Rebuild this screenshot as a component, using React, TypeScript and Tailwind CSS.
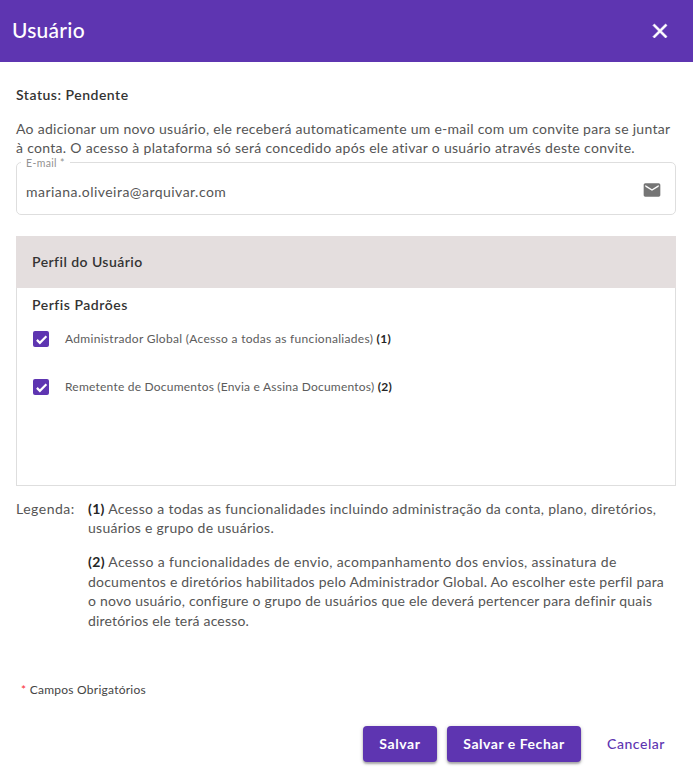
import React from 'react';

function Check() {
  return (
    <span className="flex h-4 w-4 shrink-0 items-center justify-center rounded-[2px] bg-[#5e35b1]">
      <svg viewBox="0 0 24 24" className="h-[13px] w-[13px]" fill="none" stroke="#fff" strokeWidth="4">
        <path d="M3.5 12.7 9 18.2 21 6.2" />
      </svg>
    </span>
  );
}

function Line({ className, children }: { className: string; children: React.ReactNode }) {
  return <span className={`block whitespace-nowrap ${className}`}>{children}</span>;
}

function ProfileRow({ label, mark, tracking }: { label: string; mark: string; tracking: string }) {
  return (
    <label className="flex h-12 items-center gap-4 pl-4">
      <Check />
      <span className={`whitespace-nowrap text-xs text-[#5c5c5c] ${tracking}`}>
        {label} <b className="text-[#262626]">{mark}</b>
      </span>
    </label>
  );
}

export default function App() {
  return (
    <div className="flex h-[774px] w-[693px] flex-col bg-white font-['Lato','Noto_Sans',sans-serif] text-sm leading-[19.6px] text-[#555]">
      <header className="flex h-[62px] shrink-0 items-center justify-between bg-[#5e35b1] pl-3 pr-[21px] text-white">
        <h1 className="pb-[3px] text-[21px] font-medium tracking-[0.25px]">Usuário</h1>
        <svg viewBox="0 0 24 24" className="h-6 w-6" fill="#fff">
          <path d="M19 6.41 17.59 5 12 10.59 6.41 5 5 6.41 10.59 12 5 17.59 6.41 19 12 13.41 17.59 19 19 17.59 13.41 12z" stroke="#fff" strokeWidth="0.7" />
        </svg>
      </header>

      <main className="px-4 pt-[23px]">
        <p className="font-semibold tracking-[0.5px] text-[#333]">Status: Pendente</p>
        <p className="mt-[14px]">
          <Line className="tracking-[0.28px]">Ao adicionar um novo usuário, ele receberá automaticamente um e-mail com um convite para se juntar</Line>
          <Line className="tracking-[0.3px]">à conta. O acesso à plataforma só será concedido após ele ativar o usuário através deste convite.</Line>
        </p>

        <fieldset className="-mt-[1px] h-[58px] w-[660px] rounded-[5px] border border-[#dedede] pl-1 pr-[13px]">
          <legend className="h-[11px] px-[5px] pt-px text-[10.5px] leading-[11px] tracking-[0.35px] text-[#929292]">E-mail *</legend>
          <div className="flex h-[46px] items-center justify-between pl-[5px]">
            <span className="pt-[2px] tracking-[0.47px]">mariana.oliveira@arquivar.com</span>
            <svg viewBox="0 0 24 24" className="mb-px h-5 w-5" fill="#757575">
              <path d="M20 4H4c-1.1 0-1.99.9-1.99 2L2 18c0 1.1.9 2 2 2h16c1.1 0 2-.9 2-2V6c0-1.1-.9-2-2-2zm0 4-8 5-8-5V6l8 5 8-5v2z" />
            </svg>
          </div>
        </fieldset>

        <section className="mt-[21px] h-[250px] w-[660px] border border-[#dedede]">
          <h2 className="-mx-px -mt-px flex h-[52px] items-center bg-[#e4dede] pl-4 font-semibold tracking-[0.44px] text-[#333]">Perfil do Usuário</h2>
          <h3 className="mb-px mt-[7px] pl-[15px] font-semibold tracking-[0.52px] text-[#333]">Perfis Padrões</h3>
          <ProfileRow label="Administrador Global (Acesso a todas as funcionaliades)" mark="(1)" tracking="tracking-[0.3px]" />
          <ProfileRow label="Remetente de Documentos (Envia e Assina Documentos)" mark="(2)" tracking="tracking-[0.22px]" />
        </section>

        <section className="mt-[13px] flex">
          <span className="w-[72px] shrink-0 tracking-[0.5px]">Legenda:</span>
          <div>
            <p>
              <Line className="tracking-[0.31px]"><b className="text-[#262626]">(1)</b> Acesso a todas as funcionalidades incluindo administração da conta, plano, diretórios,</Line>
              <Line className="tracking-[0.26px]">usuários e grupo de usuários.</Line>
            </p>
            <p className="mt-[14px]">
              <Line className="tracking-[0.35px]"><b className="text-[#262626]">(2)</b> Acesso a funcionalidades de envio, acompanhamento dos envios, assinatura de</Line>
              <Line className="tracking-[0.22px]">documentos e diretórios habilitados pelo Administrador Global. Ao escolher este perfil para</Line>
              <Line className="tracking-[0.22px]">o novo usuário, configure o grupo de usuários que ele deverá pertencer para definir quais</Line>
              <Line className="tracking-[0.18px]">diretórios ele terá acesso.</Line>
            </p>
          </div>
        </section>

        <p className="mt-[50px] pl-[5px] text-xs leading-[19.6px] tracking-[0.25px] text-[#444]"><span className="text-red-500">*</span> Campos Obrigatórios</p>
      </main>

      <footer className="mt-auto mb-3 flex h-9 items-center pl-[363px] font-bold text-white">
        <button className="h-9 w-[74px] whitespace-nowrap rounded bg-[#5e35b1] tracking-[0.6px] shadow-[0_2px_2px_rgba(0,0,0,0.25),0_1px_4px_rgba(0,0,0,0.2)]">Salvar</button>
        <button className="ml-[10px] h-9 w-[134px] whitespace-nowrap rounded bg-[#5e35b1] tracking-[0.53px] shadow-[0_2px_2px_rgba(0,0,0,0.25),0_1px_4px_rgba(0,0,0,0.2)]">Salvar e Fechar</button>
        <button className="ml-[26px] whitespace-nowrap font-medium tracking-[0.55px] text-[#5e35b1]">Cancelar</button>
      </footer>
    </div>
  );
}
